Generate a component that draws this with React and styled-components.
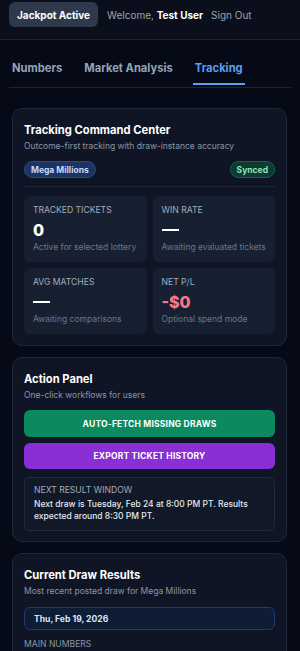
import styled, { createGlobalStyle } from 'styled-components';

const Global = createGlobalStyle`
  html, body {
    margin: 0;
    padding: 0;
    background: #060a16;
  }
  body {
    font-family: Inter, 'Noto Sans', sans-serif;
    color: #e5e7eb;
    -webkit-font-smoothing: antialiased;
  }
`;

const Page = styled.div`
  width: 300px;
  height: 651px;
  background: #060a16;
  overflow: hidden;
`;

const TopBar = styled.div`
  height: 40px;
  display: flex;
  align-items: flex-start;
  padding: 2px 9px 0;
  border-bottom: 1px solid #1c2333;
  background: #0b0f1c;
  box-sizing: border-box;
  gap: 9px;
`;

const Pill = styled.div`
  height: 25px;
  padding: 0 8px;
  border-radius: 6px;
  background: #2e3a4b;
  color: #ffffff;
  font-size: 10px;
  font-weight: 700;
  display: flex;
  align-items: center;
  white-space: nowrap;
`;

const Welcome = styled.div`
  height: 25px;
  display: flex;
  align-items: center;
  font-size: 10px;
  color: #9ca3af;
  gap: 8px;
  white-space: nowrap;
  b {
    color: #ffffff;
    font-weight: 700;
  }
`;

const Tabs = styled.div`
  margin: 21px 9px 0;
  display: flex;
  gap: 18px;
  padding: 0 0 2px 1px;
  border-bottom: 1px solid #1d2433;
`;

const Tab = styled.div`
  font-size: 11.2px;
  font-weight: 700;
  color: ${(p) => (p.active ? '#5b9df5' : '#94a3b8')};
  padding: 0 2px 8px;
  line-height: 14px;
  border-bottom: 2px solid ${(p) => (p.active ? '#5b9df5' : 'transparent')};
  white-space: nowrap;
`;

const Stack = styled.div`
  padding: 20px 13px 0 12px;
  display: flex;
  flex-direction: column;
  gap: 11px;
`;

const Card = styled.div`
  background: #0f1524;
  border: 1px solid #1f2837;
  border-radius: 10px;
  padding: 13px 11px ${(p) => p.pb || '11px'};
`;

const Title = styled.div`
  font-size: 11.2px;
  font-weight: 700;
  color: #ffffff;
  line-height: 16px;
`;

const Sub = styled.div`
  font-size: 8.5px;
  color: #8b95a7;
  margin-top: 2px;
  line-height: 13px;
`;

const BadgeRow = styled.div`
  display: flex;
  justify-content: space-between;
  margin-top: 8px;
  padding-bottom: 8px;
  border-bottom: 1px solid #1e2635;
`;

const Badge = styled.span`
  font-size: 8.5px;
  font-weight: 700;
  height: 17px;
  box-sizing: border-box;
  padding: 0 6px;
  display: inline-flex;
  align-items: center;
  border-radius: 9px;
  color: ${(p) => p.color};
  background: ${(p) => p.bg};
  border: 1px solid ${(p) => p.line};
`;

const Grid = styled.div`
  display: grid;
  grid-template-columns: 1fr 1fr;
  gap: 6px;
  margin-top: 9px;
`;

const Stat = styled.div`
  background: #172031;
  border-radius: 6px;
  height: 66px;
  padding: 8px 9px 0;
  box-sizing: border-box;
  display: flex;
  flex-direction: column;
`;

const StatLabel = styled.div`
  font-size: 8.6px;
  color: #a3adbd;
  text-transform: uppercase;
  line-height: 12px;
`;

const ValueSlot = styled.div`
  height: 18px;
  margin-top: 5px;
  display: flex;
  align-items: center;
  font-size: 16px;
  font-weight: 800;
  color: ${(p) => p.color || '#ffffff'};
`;

const Dash = styled.div`
  width: 17px;
  height: 2px;
  background: #ffffff;
`;

const StatSub = styled.div`
  font-size: 8.5px;
  color: #6b7688;
  line-height: 12px;
  margin-top: 2px;
  white-space: nowrap;
`;

const Button = styled.div`
  height: ${(p) => p.h || '27px'};
  border-radius: 6px;
  background: ${(p) => p.bg};
  color: #ffffff;
  font-size: 8.5px;
  font-weight: 700;
  letter-spacing: 0.2px;
  display: flex;
  align-items: center;
  justify-content: center;
  margin-top: ${(p) => p.mt};
`;

const InfoBox = styled.div`
  margin-top: 8px;
  border: 1px solid #232c3b;
  background: #111827;
  border-radius: 6px;
  padding: 6px 9px 8px;
`;

const InfoLabel = styled.div`
  font-size: 8.6px;
  color: #a3adbd;
  line-height: 12px;
`;

const InfoText = styled.div`
  font-size: 8.5px;
  font-weight: 500;
  color: #e6e9ef;
  line-height: 11.5px;
  margin-top: 3px;
`;

const DateBox = styled.div`
  margin-top: 9px;
  height: 23px;
  box-sizing: border-box;
  border: 1px solid #1f3b6b;
  background: #0e1c36;
  border-radius: 6px;
  padding: 0 9px;
  display: flex;
  align-items: center;
  font-size: 8.6px;
  font-weight: 700;
  color: #dce6f7;
`;

const SectionLabel = styled.div`
  margin-top: 8px;
  font-size: 8.6px;
  line-height: 12px;
  color: #8b95a7;
`;

export default function App() {
  return (
    <Page>
      <Global />
      <TopBar>
        <Pill>Jackpot Active</Pill>
        <Welcome>
          <span>
            Welcome, <b>Test User</b>
          </span>
          <span>Sign Out</span>
        </Welcome>
      </TopBar>

      <Tabs>
        <Tab>Numbers</Tab>
        <Tab>Market Analysis</Tab>
        <Tab active>Tracking</Tab>
      </Tabs>

      <Stack>
        <Card>
          <Title>Tracking Command Center</Title>
          <Sub>Outcome-first tracking with draw-instance accuracy</Sub>
          <BadgeRow>
            <Badge color="#c3d8fb" bg="#1b3463" line="#2a4a80">Mega Millions</Badge>
            <Badge color="#8ee6b8" bg="#0c3a30" line="#17634c">Synced</Badge>
          </BadgeRow>
          <Grid>
            <Stat>
              <StatLabel>Tracked Tickets</StatLabel>
              <ValueSlot>0</ValueSlot>
              <StatSub>Active for selected lottery</StatSub>
            </Stat>
            <Stat>
              <StatLabel>Win Rate</StatLabel>
              <ValueSlot><Dash /></ValueSlot>
              <StatSub>Awaiting evaluated tickets</StatSub>
            </Stat>
            <Stat>
              <StatLabel>Avg Matches</StatLabel>
              <ValueSlot><Dash /></ValueSlot>
              <StatSub>Awaiting comparisons</StatSub>
            </Stat>
            <Stat>
              <StatLabel>Net P/L</StatLabel>
              <ValueSlot color="#f8788a">-$0</ValueSlot>
              <StatSub>Optional spend mode</StatSub>
            </Stat>
          </Grid>
        </Card>

        <Card pb="10px">
          <Title>Action Panel</Title>
          <Sub>One-click workflows for users</Sub>
          <Button mt="8px" bg="#0b8a5f">AUTO-FETCH MISSING DRAWS</Button>
          <Button mt="6px" h="26px" bg="#8a2ed6">EXPORT TICKET HISTORY</Button>
          <InfoBox>
            <InfoLabel>NEXT RESULT WINDOW</InfoLabel>
            <InfoText>
              Next draw is Tuesday, Feb 24 at 8:00 PM PT. Results expected around 8:30 PM PT.
            </InfoText>
          </InfoBox>
        </Card>

        <Card>
          <Title>Current Draw Results</Title>
          <Sub>Most recent posted draw for Mega Millions</Sub>
          <DateBox>Thu, Feb 19, 2026</DateBox>
          <SectionLabel>MAIN NUMBERS</SectionLabel>
        </Card>
      </Stack>
    </Page>
  );
}
